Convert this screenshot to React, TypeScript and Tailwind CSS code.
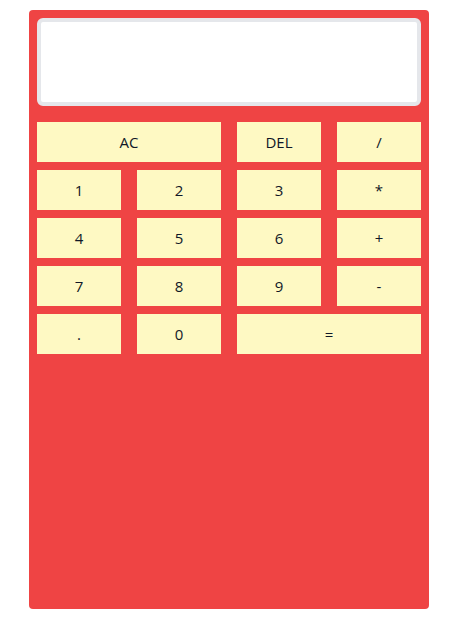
const keys: { label: string; span?: string }[] = [
  { label: 'AC', span: 'col-span-2' },
  { label: 'DEL' },
  { label: '/' },
  { label: '1' },
  { label: '2' },
  { label: '3' },
  { label: '*' },
  { label: '4' },
  { label: '5' },
  { label: '6' },
  { label: '+' },
  { label: '7' },
  { label: '8' },
  { label: '9' },
  { label: '-' },
  { label: '.' },
  { label: '0' },
  { label: '=', span: 'col-span-2' },
];

export default function App() {
  return (
    <div className="min-h-screen bg-white pt-[10px] pl-[29px] font-['Open_Sans',sans-serif]">
      <div className="w-[400px] h-[599px] bg-[#ef4444] rounded p-2">
        <div className="h-[88px] w-full bg-white border-4 border-gray-200 rounded-md mb-4" />
        <div className="grid grid-cols-4 gap-x-4 gap-y-2">
          {keys.map((k) => (
            <button
              key={k.label}
              className={`${k.span ?? ''} h-10 bg-[#fef9c3] text-[15px] text-gray-900 flex items-center justify-center`}
            >
              {k.label}
            </button>
          ))}
        </div>
      </div>
    </div>
  );
}
